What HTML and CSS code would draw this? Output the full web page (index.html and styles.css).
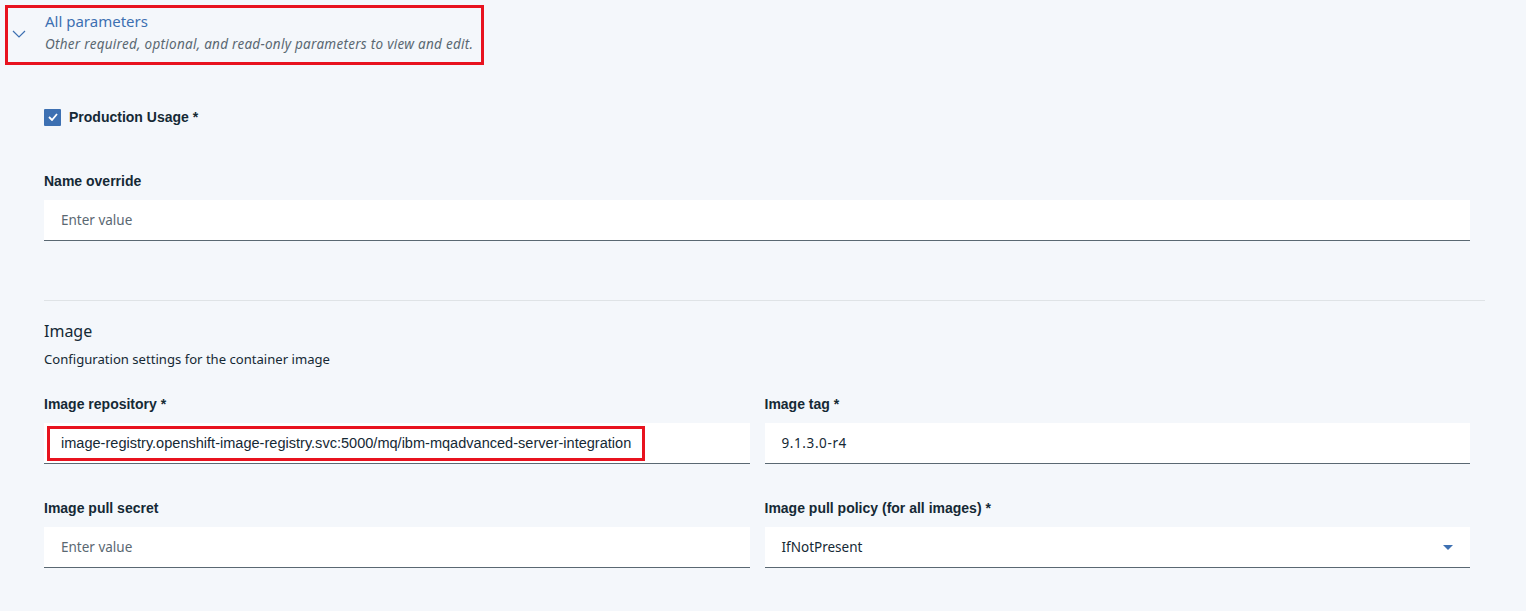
FILE: index.html
```html
<!DOCTYPE html>
<html lang="en">
<head>
<meta charset="utf-8">
<title>All parameters</title>
<link rel="stylesheet" href="styles.css">
</head>
<body>
<div class="accordion-head">
  <svg class="chevron" width="14" height="8" viewBox="0 0 14 8"><polyline points="1,1 7,7 13,1" fill="none" stroke="#3d70b2" stroke-width="1.2"/></svg>
  <div class="head-text">
    <div class="head-title">All parameters</div>
    <div class="head-sub">Other required, optional, and read-only parameters to view and edit.</div>
  </div>
</div>

<div class="content">
  <div class="check-row">
    <span class="checkbox"><svg width="10" height="8" viewBox="0 0 10 8"><polyline points="1,4 4,7 9,1" fill="none" stroke="#fff" stroke-width="1.8"/></svg></span>
    <span class="label">Production Usage *</span>
  </div>

  <div class="field name-field">
    <div class="label">Name override</div>
    <div class="input placeholder">Enter value</div>
  </div>

  <div class="divider"></div>

  <div class="section-title">Image</div>
  <div class="section-desc">Configuration settings for the container image</div>

  <div class="grid">
    <div class="field">
      <div class="label">Image repository *</div>
      <div class="input input-hl"><span class="highlight">image-registry.openshift-image-registry.svc:5000/mq/ibm-mqadvanced-server-integration</span></div>
    </div>
    <div class="field">
      <div class="label">Image tag *</div>
      <div class="input digits">9.1.3.0-r4</div>
    </div>
    <div class="field">
      <div class="label">Image pull secret</div>
      <div class="input placeholder">Enter value</div>
    </div>
    <div class="field">
      <div class="label">Image pull policy (for all images) *</div>
      <div class="input select"><span>IfNotPresent</span><svg class="caret" width="10" height="5" viewBox="0 0 10 5"><polygon points="0,0 10,0 5,5" fill="#3d70b2"/></svg></div>
    </div>
  </div>
</div>
</body>
</html>
```

FILE: styles.css
```css
* { box-sizing: border-box; }
body {
  margin: 0;
  background: #f4f7fb;
  font-family: "Noto Sans", "Open Sans", sans-serif;
  color: #152935;
}
.accordion-head {
  margin: 5px 0 0 5px;
  width: 479px;
  height: 60px;
  border: 3px solid #e8131f;
  display: flex;
  align-items: flex-start;
  padding: 3px 0 0 4px;
}
.chevron { margin-top: 19px; flex: none; }
.head-text { margin-left: 19px; }
.head-title {
  font-size: 15px;
  line-height: 20px;
  color: #3d70b2;
}
.head-sub {
  margin-top: 3px;
  font-size: 13.5px;
  letter-spacing: 0.27px;
  line-height: 20px;
  font-style: italic;
  color: #5a6872;
}
.content {
  padding: 0 56px 0 44px;
}
.check-row {
  margin-top: 42px;
  height: 20px;
  display: flex;
  align-items: center;
}
.checkbox {
  width: 17px;
  height: 17px;
  background: #3d70b2;
  border-radius: 1px;
  display: flex;
  align-items: center;
  justify-content: center;
  margin-right: 8px;
}
.label {
  font-family: "Liberation Sans", Arial, sans-serif;
  font-weight: bold;
  font-size: 14px;
  line-height: 18px;
  color: #152935;
}
.name-field { margin-top: 45px; }
.field .label { margin-bottom: 10px; }
.input {
  height: 41px;
  background: #fff;
  border-bottom: 1px solid #5a6872;
  display: flex;
  align-items: center;
  padding: 0 16px 0 17px;
  font-size: 13.5px;
  color: #152935;
}
.placeholder { color: #5a6872; }
.digits { letter-spacing: 0.6px; }
.input-hl { padding-left: 3px; }
.highlight {
  border: 3px solid #e8131f;
  padding: 4px 11px 4px 11px;
  line-height: 21px;
  font-family: "Liberation Sans", Arial, sans-serif;
  font-size: 14.55px;
}
.select { justify-content: space-between; padding-right: 17px; }
.divider {
  margin-top: 59px;
  margin-right: -15px;
  height: 1px;
  background: #dfe3e6;
}
.section-title {
  margin-top: 19px;
  font-size: 16px;
  line-height: 22px;
  color: #152935;
}
.section-desc {
  margin-top: 8px;
  font-size: 13.1px;
  line-height: 18px;
  color: #152935;
}
.grid {
  margin-top: 27px;
  display: grid;
  grid-template-columns: 1fr 1fr;
  column-gap: 15px;
  row-gap: 35px;
}
```
